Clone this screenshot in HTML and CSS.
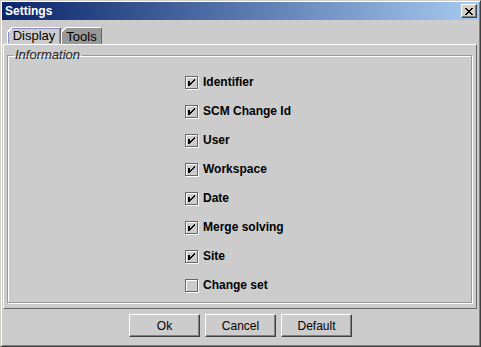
FILE: index.html
```html
<!DOCTYPE html>
<html lang="en">
<head>
    <meta charset="UTF-8">
    <title>Settings</title>
    <link rel="stylesheet" href="styles.css">
</head>
<body>
    <div class="window">
        <div class="titlebar">
            <span class="title">Settings</span>
            <button class="btn-close" title="Close">
                <svg width="8" height="7" viewBox="0 0 8 7" shape-rendering="crispEdges"><path fill="#000" d="M0 0h2v1h-2z M6 0h2v1h-2z M1 1h2v1h-2z M5 1h2v1h-2z M2 2h4v1h-4z M3 3h2v1h-2z M2 4h4v1h-4z M1 5h2v1h-2z M5 5h2v1h-2z M0 6h2v1h-2z M6 6h2v1h-2z"/></svg>
            </button>
        </div>

        <div class="tabs">
            <div class="tab selected"><span class="tab-label">Display</span></div>
            <div class="tab tools"><span class="tab-label">Tools</span></div>
        </div>

        <div class="pane">
            <fieldset class="group">
                <legend>Information</legend>
                <div class="options">
                    <label class="option"><span class="check on"></span>Identifier</label>
                    <label class="option"><span class="check on"></span>SCM Change Id</label>
                    <label class="option"><span class="check on"></span>User</label>
                    <label class="option"><span class="check on"></span>Workspace</label>
                    <label class="option"><span class="check on"></span>Date</label>
                    <label class="option"><span class="check on"></span>Merge solving</label>
                    <label class="option"><span class="check on"></span>Site</label>
                    <label class="option"><span class="check"></span>Change set</label>
                </div>
            </fieldset>
        </div>

        <div class="buttons">
            <button class="btn">Ok</button>
            <button class="btn">Cancel</button>
            <button class="btn">Default</button>
        </div>
    </div>
</body>
</html>
```

FILE: styles.css
```css
body {
    margin: 0;
    padding: 0;
    font-family: "Liberation Sans", Arial, sans-serif;
    font-size: 12px;
    background-color: #cccccc;
}
.window {
    width: 481px;
    height: 347px;
    box-sizing: border-box;
    display: flex;
    flex-direction: column;
    padding: 1px;
    border: 1px solid;
    border-color: #d4d0c8 #404040 #404040 #d4d0c8;
    box-shadow: inset 1px 1px #ffffff, inset -1px -1px #808080;
    background-color: #cccccc;
}
.titlebar {
    height: 18px;
    display: flex;
    align-items: center;
    justify-content: space-between;
    padding: 0 2px 0 3px;
    background: linear-gradient(to right, #0a246a, #a6caf0);
}
.title {
    color: #fff;
    font-weight: bold;
    font-size: 12px;
}
.btn-close {
    width: 16px;
    height: 14px;
    padding: 0;
    display: flex;
    align-items: center;
    justify-content: center;
    background-color: #d4d0c8;
    border: 1px solid;
    border-color: #ffffff #404040 #404040 #ffffff;
    box-shadow: inset -1px -1px #808080;
}
.tabs {
    display: flex;
    padding: 7px 0 0 4px;
    margin-left: 1px;
}
.tab {
    position: relative;
    height: 17px;
    box-sizing: border-box;
    padding: 1px 1px 0 1px;
    border-top: 1px solid #ffffff;
    border-left: 1px solid #ffffff;
    border-right: 1px solid #666666;
    background-color: #999999;
}
.tab::before {
    content: "";
    position: absolute;
    left: -1px;
    top: -1px;
    width: 6px;
    height: 6px;
    background: linear-gradient(135deg, #cccccc 0 3.3px, #ffffff 3.3px 4.4px, transparent 4.4px);
}
.tab.selected {
    width: 54px;
    background-color: #cccccc;
    padding: 0;
}
.tab.tools {
    width: 41px;
}
.tab-label {
    display: block;
    height: 15px;
    line-height: 15px;
    padding: 0 2px;
    text-align: center;
    font-size: 13px;
}
.tab.selected .tab-label {
    height: 14px;
    line-height: 14px;
    border: 1px solid #8c8cc0;
    border-bottom: none;
    padding: 0 2px;
}
.pane {
    flex: 1;
    margin: 0 2px 0 1px;
    border-top: 1px solid #ffffff;
    border-left: 1px solid #ffffff;
    border-right: 1px solid #666666;
    border-bottom: 1px solid #666666;
    display: flex;
    flex-direction: column;
}
.group {
    margin: 3px 4px 0 3px;
    padding: 0 0 0 5px;
    border: 1px solid #999999;
    box-shadow: inset 1px 1px #ffffff, 1px 1px #ffffff;
    min-width: 0;
}
.group legend {
    padding: 0 2px;
    font-style: italic;
    font-size: 13px;
    line-height: 14px;
    color: #222222;
}
.options {
    display: flex;
    flex-direction: column;
    gap: 13px;
    padding: 12px 0 9px 172px;
}
.option {
    display: flex;
    align-items: center;
    gap: 4px;
    height: 16px;
    font-weight: bold;
    color: #000;
}
.check {
    width: 11px;
    height: 11px;
    border: 1px solid #666666;
    box-shadow: inset 1px 1px #ffffff, 1px 1px #ffffff;
    margin-right: 1px;
    box-sizing: content-box;
}
.check.on {
    background: url("data:image/svg+xml;utf8,<svg xmlns='http://www.w3.org/2000/svg' width='11' height='11' viewBox='1 1 11 11' shape-rendering='crispEdges'><path fill='black' d='M3 5h2v5h-2z M9 3h1v2h-1z M8 4h1v2h-1z M7 5h1v2h-1z M6 6h1v2h-1z M5 7h1v2h-1z'/></svg>") no-repeat;
}
.buttons {
    display: flex;
    justify-content: center;
    gap: 5px;
    padding: 5px 0 8px;
}
.btn {
    width: 71px;
    height: 23px;
    padding: 0;
    font-family: "Liberation Sans", Arial, sans-serif;
    font-size: 12px;
    color: #000;
    background-color: #cccccc;
    border: 1px solid;
    border-color: #ffffff #404040 #404040 #ffffff;
    box-shadow: inset -1px -1px #808080;
}
```
